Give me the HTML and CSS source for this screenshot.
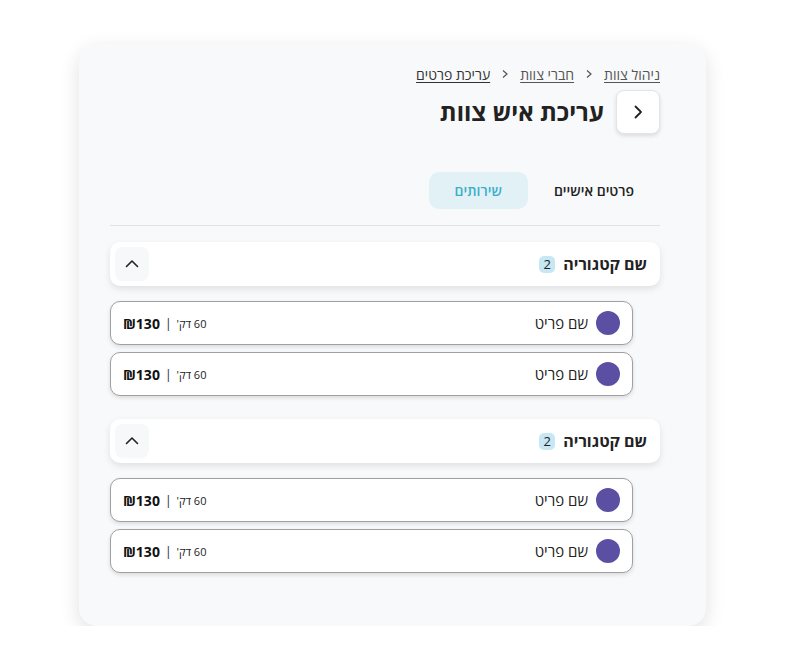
FILE: index.html
```html
<!DOCTYPE html>
<html lang="he" dir="rtl">
<head>
<meta charset="utf-8">
<title>עריכת איש צוות</title>
<link rel="stylesheet" href="styles.css">
</head>
<body>
<div class="page">
  <main class="card">
    <nav class="crumbs">
      <a class="crumb" href="#">ניהול צוות</a>
      <svg class="sep" width="8" height="10" viewBox="0 0 8 10"><path d="M2 1.5 L6 5 L2 8.5" fill="none" stroke="#555" stroke-width="1.2"/></svg>
      <a class="crumb" href="#">חברי צוות</a>
      <svg class="sep" width="8" height="10" viewBox="0 0 8 10"><path d="M2 1.5 L6 5 L2 8.5" fill="none" stroke="#555" stroke-width="1.2"/></svg>
      <a class="crumb current" href="#">עריכת פרטים</a>
    </nav>
    <div class="title-row">
      <button class="back-btn" aria-label="חזרה">
        <svg width="16" height="16" viewBox="0 0 16 16"><path d="M5.5 2.5 L11 8 L5.5 13.5" fill="none" stroke="#222" stroke-width="1.8" stroke-linecap="round" stroke-linejoin="round"/></svg>
      </button>
      <h1 class="title">עריכת איש צוות</h1>
    </div>
    <div class="tabs">
      <button class="tab">פרטים אישיים</button>
      <button class="tab active">שירותים</button>
    </div>
    <section class="group">
      <div class="cat-head">
        <div class="cat-name">שם קטגוריה <span class="badge">2</span></div>
        <button class="collapse" aria-label="כווץ">
          <svg width="16" height="16" viewBox="0 0 16 16"><path d="M2.5 10.5 L8 5 L13.5 10.5" fill="none" stroke="#222" stroke-width="1.6" stroke-linecap="round" stroke-linejoin="round"/></svg>
        </button>
      </div>
      <ul class="items">
        <li class="item"><span class="dot"></span><span class="name">שם פריט</span><span class="meta"><span class="dur">60 דק'</span><span class="bar">|</span><span class="price">₪130</span></span></li>
        <li class="item"><span class="dot"></span><span class="name">שם פריט</span><span class="meta"><span class="dur">60 דק'</span><span class="bar">|</span><span class="price">₪130</span></span></li>
      </ul>
    </section>
    <section class="group">
      <div class="cat-head">
        <div class="cat-name">שם קטגוריה <span class="badge">2</span></div>
        <button class="collapse" aria-label="כווץ">
          <svg width="16" height="16" viewBox="0 0 16 16"><path d="M2.5 10.5 L8 5 L13.5 10.5" fill="none" stroke="#222" stroke-width="1.6" stroke-linecap="round" stroke-linejoin="round"/></svg>
        </button>
      </div>
      <ul class="items">
        <li class="item"><span class="dot"></span><span class="name">שם פריט</span><span class="meta"><span class="dur">60 דק'</span><span class="bar">|</span><span class="price">₪130</span></span></li>
        <li class="item"><span class="dot"></span><span class="name">שם פריט</span><span class="meta"><span class="dur">60 דק'</span><span class="bar">|</span><span class="price">₪130</span></span></li>
      </ul>
    </section>
  </main>
</div>
</body>
</html>
```
FILE: styles.css
```css
* { box-sizing: border-box; }
html, body { margin: 0; padding: 0; background: #ffffff; }
body { font-family: "Open Sans", "Noto Sans", "DejaVu Sans", sans-serif; color: #222; }
.page { padding: 44px 79px 0 79px; }
.card {
  width: 627px;
  height: 582px;
  background: #f8f9fa;
  border-radius: 18px;
  box-shadow: 0 6px 20px rgba(0,0,0,0.12);
  padding: 20px 46px 0 31px;
}
.crumbs { display: flex; align-items: center; gap: 11px; height: 20px; font-size: 14px; }
.crumb { color: #555; text-decoration: underline; text-underline-offset: 2px; }
.crumb.current { color: #333; }
.sep { display: block; }
.title-row { display: flex; align-items: center; gap: 12px; margin-top: 6px; }
.back-btn {
  width: 44px; height: 44px;
  display: flex; align-items: center; justify-content: center;
  background: #fff; border: 1px solid #e2e4e7; border-radius: 8px;
  box-shadow: 0 2px 4px rgba(0,0,0,0.12);
  padding: 0;
}
.title { margin: 0; font-size: 24px; font-weight: 700; color: #222; line-height: 1; }
.tabs { display: flex; margin-top: 38px; padding-bottom: 16px; border-bottom: 1px solid #e1e4e7; }
.tab {
  font-family: inherit; font-size: 14px; font-weight: 600; color: #222;
  background: transparent; border: 0; border-radius: 10px;
  height: 37px; padding: 0 26px;
}
.tab.active { background: #e2f1f5; color: #3cb0c8; }
.group { margin-top: 16px; margin-bottom: 23px; }
.cat-head {
  display: flex; align-items: center; justify-content: space-between;
  height: 44px; background: #fff; border-radius: 10px;
  box-shadow: 0 3px 7px rgba(0,0,0,0.1);
  padding: 0 13px 0 5px;
}
.cat-name { display: flex; align-items: center; gap: 8px; font-size: 16px; font-weight: 700; color: #222; }
.badge {
  display: inline-flex; align-items: center; justify-content: center;
  width: 16px; height: 17px; border-radius: 5px;
  background: #c7e7f5; font-size: 13px; font-weight: 400; color: #222;
}
.collapse {
  width: 34px; height: 34px; border: 0; border-radius: 8px; background: #f6f8fa;
  display: flex; align-items: center; justify-content: center; padding: 0;
}
.items { list-style: none; margin: 15px 27px 0 0; padding: 0; display: flex; flex-direction: column; gap: 7px; }
.item {
  display: flex; align-items: center; height: 44px;
  background: #fff; border: 1px solid #a0a0a0; border-radius: 10px;
  box-shadow: 0 2px 4px rgba(0,0,0,0.12);
  padding: 0 12px;
}
.dot { width: 24px; height: 24px; border-radius: 50%; background: #5a4fa2; flex: none; }
.name { margin-right: 8px; font-size: 15px; color: #222; }
.meta { margin-right: auto; display: flex; align-items: center; gap: 5px; }
.dur { font-size: 11px; color: #222; }
.bar { font-size: 12px; color: #222; }
.price { font-size: 14px; font-weight: 700; color: #111; }
```
